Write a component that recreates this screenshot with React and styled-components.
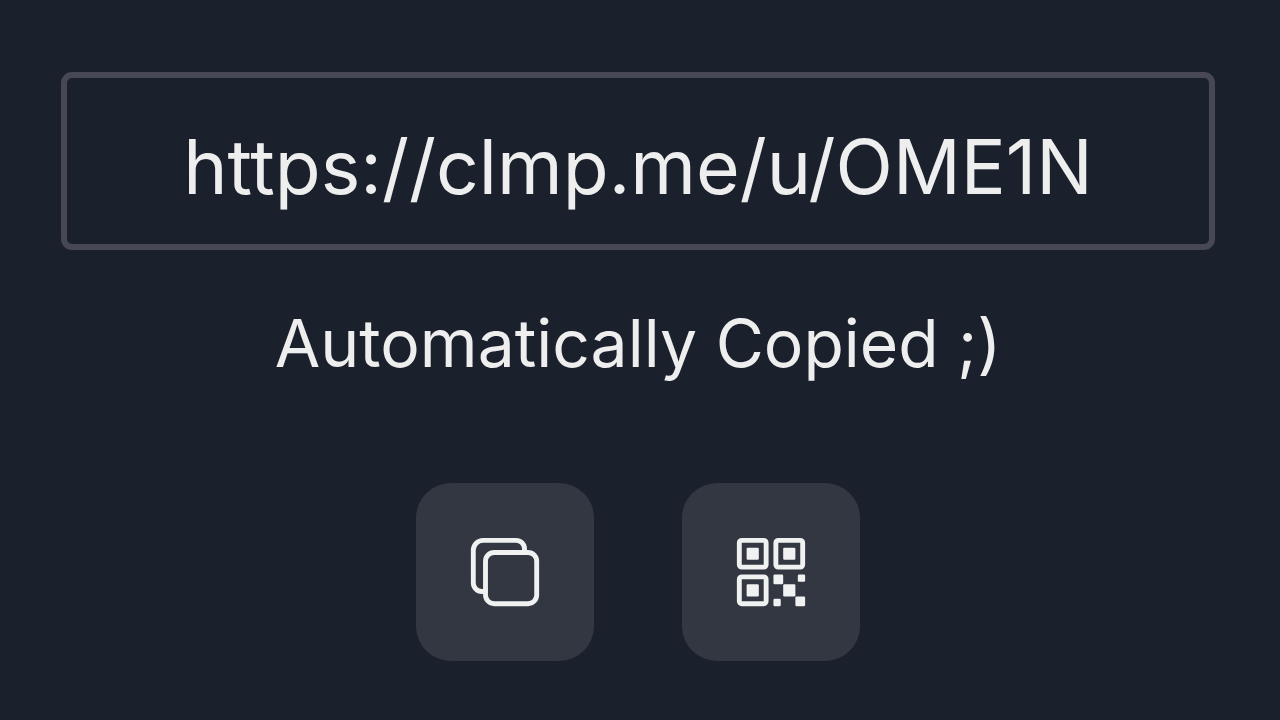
import React from "react";
import styled, { createGlobalStyle } from "styled-components";
import { IoCopyOutline, IoQrCodeOutline } from "react-icons/io5";

const shortUrl = "https://clmp.me/u/OME1N";

const App = () => {
  const copy = () => {
    navigator.clipboard?.writeText(shortUrl);
  };

  return (
    <>
      <GlobalStyle />
      <Container>
        <UrlBox
          type="text"
          aria-label="Short link"
          value={shortUrl}
          readOnly
          onFocus={(e) => e.target.select()}
        />
        <Message>Automatically Copied ;)</Message>
        <Actions>
          <IconButton type="button" aria-label="Copy link" onClick={copy}>
            <IoCopyOutline />
          </IconButton>
          <IconButton type="button" aria-label="Show QR code">
            <IoQrCodeOutline />
          </IconButton>
        </Actions>
      </Container>
    </>
  );
};

const GlobalStyle = createGlobalStyle`
  * {
    box-sizing: border-box;
  }
  body {
    margin: 0;
    background-color: #1b212c;
    color: #eeeeee;
    font-family: Inter, sans-serif;
  }
`;

const Container = styled.main`
  display: flex;
  flex-direction: column;
  align-items: center;
  min-height: 100vh;
  padding: 72px 65px 59px 61px;
`;

const UrlBox = styled.input`
  width: 100%;
  height: 178px;
  padding: 10px 40px 0;
  border: 6px solid #474854;
  border-radius: 11px;
  background-color: transparent;
  color: inherit;
  font-family: inherit;
  font-size: 75px;
  text-align: center;
  outline: none;
`;

const Message = styled.p`
  margin: 53px 0 0;
  font-size: 66px;
  line-height: 80px;
  text-align: center;
`;

const Actions = styled.div`
  display: flex;
  gap: 88px;
  margin-top: 100px;
`;

const IconButton = styled.button`
  display: flex;
  align-items: center;
  justify-content: center;
  width: 178px;
  height: 178px;
  padding: 0;
  border: none;
  border-radius: 35px;
  background-color: #333741;
  color: #f0f1f1;
  cursor: pointer;
  svg {
    width: 78px;
    height: 78px;
  }
  &:hover {
    background-color: #3d404c;
  }
`;

export default App;
